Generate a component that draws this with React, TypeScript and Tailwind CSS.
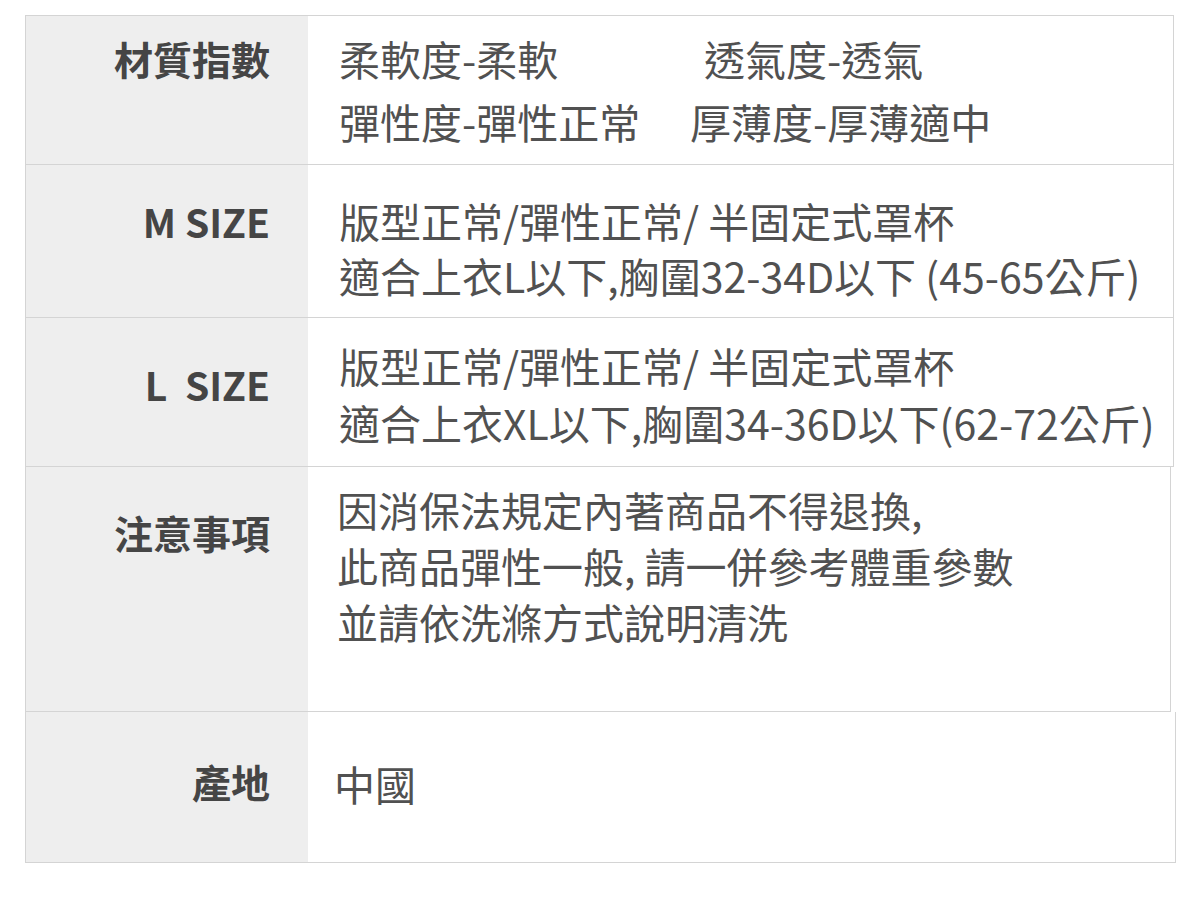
const font = { fontFamily: '"Noto Sans CJK TC", "Noto Sans", sans-serif' };

type Row = {
  label: string;
  h: string;
  w: string;
  labelPt: string;
  valuePt: string;
  lh: string;
  content: React.ReactNode;
};

const rows: Row[] = [
  {
    label: "材質指數",
    h: "h-[150px]",
    w: "w-[1149px]",
    labelPt: "pt-[11px]",
    valuePt: "pt-[11px] pl-[31px]",
    lh: "leading-[63px]",
    content: (
      <>
        <div className="flex">
          <span className="w-[365px]">柔軟度-柔軟</span>
          <span>透氣度-透氣</span>
        </div>
        <div className="flex">
          <span className="w-[351px]">彈性度-彈性正常</span>
          <span>厚薄度-厚薄適中</span>
        </div>
      </>
    ),
  },
  {
    label: "M SIZE",
    h: "h-[153px]",
    w: "w-[1149px]",
    labelPt: "pt-[29px]",
    valuePt: "pt-[28px] pl-[31px]",
    lh: "leading-[55px]",
    content: (
      <>
        <div>版型正常/彈性正常/ 半固定式罩杯</div>
        <div>適合上衣L以下,胸圍32-34D以下 (45-65公斤)</div>
      </>
    ),
  },
  {
    label: "L\u00a0\u00a0SIZE",
    h: "h-[149px]",
    w: "w-[1149px]",
    labelPt: "pt-[38px]",
    valuePt: "pt-[19px] pl-[31px]",
    lh: "leading-[57px]",
    content: (
      <>
        <div>版型正常/彈性正常/ 半固定式罩杯</div>
        <div>適合上衣XL以下,胸圍34-36D以下(62-72公斤)</div>
      </>
    ),
  },
  {
    label: "注意事項",
    h: "h-[245px]",
    w: "w-[1146px]",
    labelPt: "pt-[37px]",
    valuePt: "pt-[14px] pl-[29px]",
    lh: "leading-[56px]",
    content: (
      <>
        <div>因消保法規定內著商品不得退換,</div>
        <div>此商品彈性一般, 請一併參考體重參數</div>
        <div>並請依洗滌方式說明清洗</div>
      </>
    ),
  },
  {
    label: "產地",
    h: "h-[151px]",
    w: "w-[1151px]",
    labelPt: "pt-[41px]",
    valuePt: "pt-[43px] pl-[26px]",
    lh: "leading-[56px]",
    content: <div>中國</div>,
  },
];

export default function App() {
  return (
    <div className="min-h-[905px] w-[1200px] bg-white pt-[15px] pl-[25px]" style={font}>
      <div className="flex flex-col">
        {rows.map((r, i) => (
          <div
            key={r.label}
            className={`grid grid-cols-[282px_1fr] border-x border-b border-[#d4d4d4] ${i === 0 ? "border-t" : ""} ${r.h} ${r.w}`}
          >
            <div
              className={`bg-[#eeeeee] pr-[38px] text-right text-[39px] font-bold text-[#454545] ${r.lh} ${r.labelPt}`}
            >
              {r.label}
            </div>
            <div className={`bg-white text-[41px] text-[#515151] whitespace-nowrap ${r.lh} ${r.valuePt}`}>
              {r.content}
            </div>
          </div>
        ))}
      </div>
    </div>
  );
}
